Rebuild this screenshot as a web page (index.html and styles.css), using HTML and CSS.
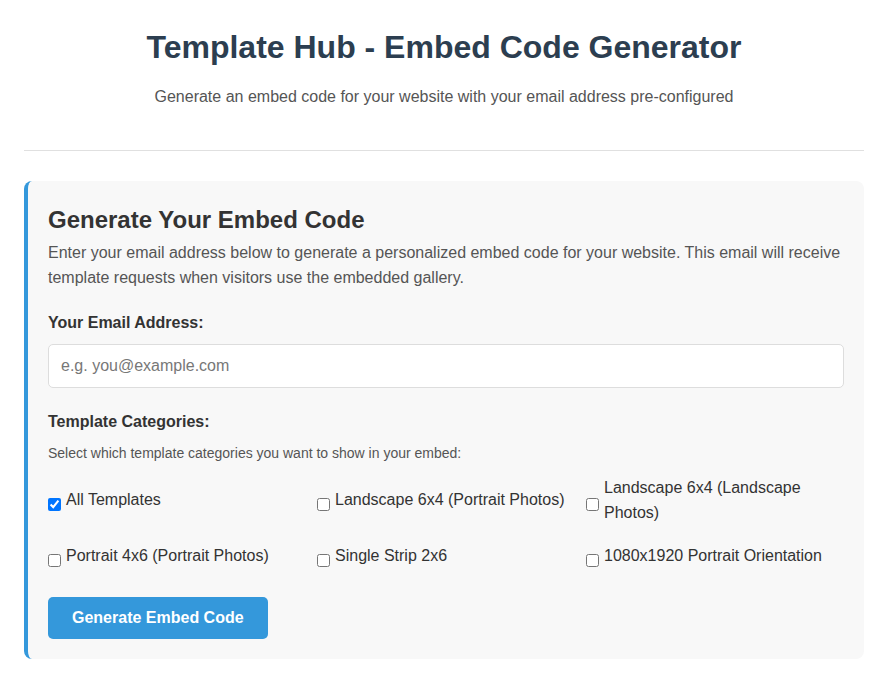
FILE: index.html
```html
<!DOCTYPE html>
<html lang="en">
<head>
<meta charset="utf-8">
<title>Template Hub - Embed Code Generator</title>
<link rel="stylesheet" href="styles.css">
</head>
<body>
<div class="page">
  <header class="header">
    <h1 class="title">Template Hub - Embed Code Generator</h1>
    <p class="subtitle">Generate an embed code for your website with your email address pre-configured</p>
  </header>

  <section class="card">
    <h2 class="card-title">Generate Your Embed Code</h2>
    <p class="card-desc">Enter your email address below to generate a personalized embed code for your website. This email will receive template requests when visitors use the embedded gallery.</p>

    <div class="form-group">
      <label class="field-label" for="email">Your Email Address:</label>
      <input class="text-input" id="email" type="email" placeholder="e.g. you@example.com">
    </div>

    <div class="form-group-last">
      <label class="field-label">Template Categories:</label>
      <p class="hint">Select which template categories you want to show in your embed:</p>
      <div class="category-grid">
        <label class="check-item"><input type="checkbox" checked><span>All Templates</span></label>
        <label class="check-item"><input type="checkbox"><span>Landscape 6x4 (Portrait Photos)</span></label>
        <label class="check-item"><input type="checkbox"><span>Landscape 6x4 (Landscape Photos)</span></label>
        <label class="check-item"><input type="checkbox"><span>Portrait 4x6 (Portrait Photos)</span></label>
        <label class="check-item"><input type="checkbox"><span>Single Strip 2x6</span></label>
        <label class="check-item"><input type="checkbox"><span>1080x1920 Portrait Orientation</span></label>
      </div>
    </div>

    <button class="btn" type="button">Generate Embed Code</button>
  </section>
</div>
</body>
</html>
```

FILE: styles.css
```css
* {
  box-sizing: border-box;
}

body {
  margin: 0;
  font-family: "Liberation Sans", Arial, sans-serif;
  font-size: 16px;
  line-height: 1.6;
  color: #333;
  background: #fff;
}

.page {
  margin: 0 16px 0 24px;
  padding-top: 22px;
}

.header {
  text-align: center;
  padding-bottom: 40px;
  border-bottom: 1px solid #e0e0e0;
  margin-bottom: 30px;
}

.title {
  margin: 0 0 11px;
  font-size: 32px;
  font-weight: bold;
  color: #2c3e50;
}

.subtitle {
  margin: 0;
  color: #555;
}

.card {
  background: #f8f8f8;
  border-left: 4px solid #3498db;
  border-radius: 8px;
  padding: 24px 20px 20px 20px;
}

.card-title {
  margin: 0 0 5px;
  font-size: 24px;
  line-height: 30px;
  color: #333;
}

.card-desc {
  margin: 0 0 19px;
  color: #555;
}

.form-group {
  margin-bottom: 21px;
}

.field-label {
  display: block;
  font-weight: bold;
  color: #333;
  margin-bottom: 8px;
}

.text-input {
  display: block;
  width: 100%;
  padding: 12px;
  font-family: inherit;
  font-size: 16px;
  line-height: 18px;
  border: 1px solid #ddd;
  border-radius: 5px;
  background: #fff;
  color: #333;
}

.text-input::placeholder {
  color: #777;
}

.hint {
  margin: 0 0 10px;
  font-size: 14px;
  color: #555;
}

.category-grid {
  display: grid;
  grid-template-columns: repeat(3, 1fr);
  column-gap: 11px;
  row-gap: 17px;
  align-items: center;
  margin-bottom: 29px;
}

.check-item {
  display: flex;
  align-items: center;
  color: #333;
}

.check-item input {
  flex: none;
  width: 13px;
  height: 13px;
  margin: 9px 5px 0 0;
}

.btn {
  display: inline-block;
  padding: 12px 24px;
  font-family: inherit;
  font-size: 16px;
  line-height: 18px;
  font-weight: bold;
  color: #fff;
  background: #3498db;
  border: none;
  border-radius: 5px;
}
```
